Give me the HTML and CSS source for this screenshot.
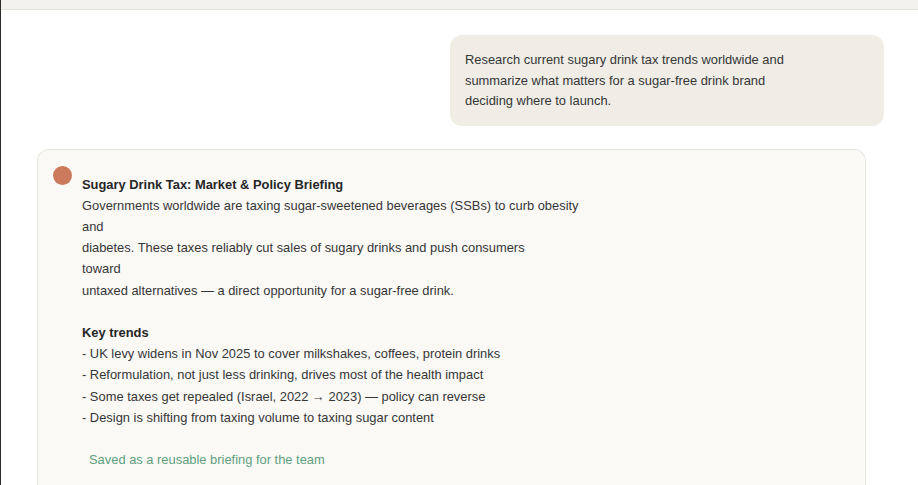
FILE: index.html
```html
<!DOCTYPE html>
<html lang="en">
<head>
<meta charset="utf-8">
<title>Briefing</title>
<link rel="stylesheet" href="styles.css">
</head>
<body>
<div class="frame">
  <div class="topbar"></div>
  <main class="chat">
    <div class="user-row">
      <div class="bubble">Research current sugary drink tax trends worldwide and<br>summarize what matters for a sugar-free drink brand<br>deciding where to launch.</div>
    </div>
    <section class="card">
      <span class="dot"></span>
      <div class="content">
        <p class="title">Sugary Drink Tax: Market &amp; Policy Briefing</p>
        <p>Governments worldwide are taxing sugar-sweetened beverages (SSBs) to curb obesity</p>
        <p>and</p>
        <p>diabetes. These taxes reliably cut sales of sugary drinks and push consumers</p>
        <p>toward</p>
        <p>untaxed alternatives — a direct opportunity for a sugar-free drink.</p>
        <p class="title gap">Key trends</p>
        <p>- UK levy widens in Nov 2025 to cover milkshakes, coffees, protein drinks</p>
        <p>- Reformulation, not just less drinking, drives most of the health impact</p>
        <p>- Some taxes get repealed (Israel, 2022 → 2023) — policy can reverse</p>
        <p>- Design is shifting from taxing volume to taxing sugar content</p>
        <p class="note">Saved as a reusable briefing for the team</p>
      </div>
    </section>
  </main>
</div>
</body>
</html>
```
FILE: styles.css
```css
* { box-sizing: border-box; }
html, body { margin: 0; padding: 0; background: #ffffff; }
body {
  font-family: "Liberation Sans", Arial, sans-serif;
  font-size: 12.9px;
  color: #303030;
  overflow: hidden;
  height: 485px;
}
.frame {
  border-left: 1px solid #2b2b2b;
  height: 485px;
}
.topbar {
  height: 10px;
  background: #f3f2ee;
  border-bottom: 1px solid #e4e2dc;
}
.chat {
  display: flex;
  flex-direction: column;
  padding: 25px 34px 0 36px;
}
.user-row {
  display: flex;
  justify-content: flex-end;
}
.bubble {
  width: 434px;
  background: #efede6;
  border-radius: 12px;
  padding: 15px 15px 14px;
  line-height: 20.5px;
  color: #363636;
}
.card {
  margin-top: 23px;
  margin-right: 18px;
  display: flex;
  background: #faf9f6;
  border: 1px solid #e9e7e1;
  border-bottom: none;
  border-radius: 12px 12px 0 0;
  padding: 16px 16px 30px 15px;
  min-height: 340px;
}
.dot {
  flex: none;
  width: 19px;
  height: 19px;
  border-radius: 50%;
  background: #cb7a5b;
  margin-right: 10px;
}
.content {
  padding-top: 8px;
}
.content p {
  margin: 0;
  line-height: 21.2px;
  color: #363636;
}
.content .title {
  font-weight: bold;
  color: #262626;
}
.content .gap {
  margin-top: 21.2px;
}
.content .note {
  margin-top: 21.2px;
  padding-left: 7px;
  color: #5e9f80;
}
```
